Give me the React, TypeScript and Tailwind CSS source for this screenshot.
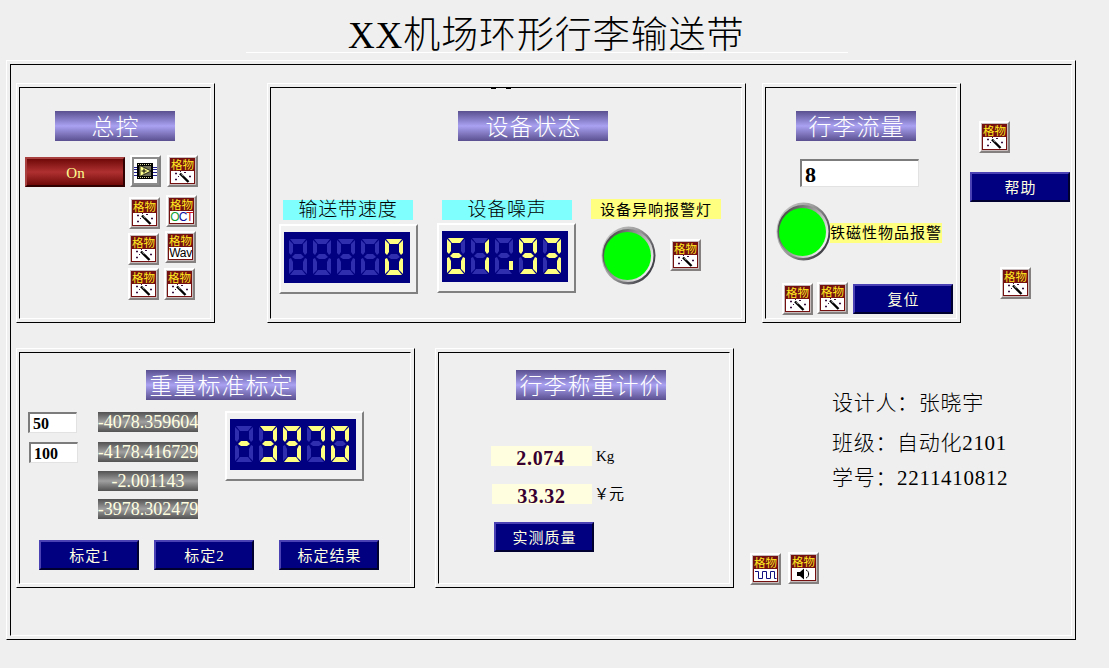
import React from 'react';

type Kids = { children?: React.ReactNode; className?: string };

function Panel({ children, className = '' }: Kids) {
  return (
    <section className={`shrink-0 border border-t-white border-l-white border-r-black border-b-black pt-[3px] pl-[2px] pr-[3px] pb-[3px] ${className}`}>
      <div className="h-full w-full border border-t-black border-l-black border-r-white border-b-white">{children}</div>
    </section>
  );
}

function Heading({ children, className = '' }: Kids) {
  return (
    <h2 className={`flex h-[30px] shrink-0 items-center justify-center whitespace-nowrap bg-linear-to-b from-[#5a5090] via-[#aaa2f2] to-[#5a5090] pt-[3px] pl-px text-[23px] leading-[27px] font-light tracking-[1px] text-white ${className}`}>
      {children}
    </h2>
  );
}

function Button({ children, className = '' }: Kids) {
  return (
    <button className={`flex h-[30px] w-[100px] shrink-0 items-center justify-center border-2 border-t-[#4a42b4] border-l-[#4a42b4] border-r-[#000030] border-b-[#000030] bg-[#000080] pt-[2px] pl-px text-[15px] leading-[24px] tracking-[1px] text-[#ffffe0] ${className}`}>
      {children}
    </button>
  );
}

function Wand() {
  return (
    <svg width="23" height="12" viewBox="0 0 23 12">
      <path d="M9 2.5l8.5 8.5" stroke="#000" strokeWidth="2.4" fill="none" />
      <path d="M10.5 3.2l2 2" stroke="#e8e8e8" strokeWidth="0.8" />
      <path d="M4 2h2v1h-2zM4.500 1.500h1v2h-1zM13 1h2v1h-2zM4 8h2v1h-2zM4.500 7.500h1v2h-1zM18 5h2v1h-2zM18.500 4.500h1v2h-1zM7 5h1v1h-1zM9 0h1v1h-1z" fill="#3a1040" />
    </svg>
  );
}

function Tile({ kind = 'wand', className = '' }: { kind?: 'wand' | 'oct' | 'wav' | 'wave' | 'sound'; className?: string }) {
  return (
    <div className={`h-[32px] w-[31px] shrink-0 border-2 border-t-white border-l-white border-r-[#858080] border-b-[#858080] bg-[#c8bcbc] pt-px pl-px ${className}`}>
      <div className="flex h-[26px] w-[25px] flex-col overflow-hidden border border-[#741010] bg-white">
        <div className="flex h-[12px] shrink-0 items-center justify-center whitespace-nowrap bg-[#741010] text-[11.5px] leading-[12px] text-[#ffe820]">格物</div>
        {kind === 'wand' && <Wand />}
        {kind === 'oct' && (
          <div className="flex h-[12px] justify-center font-['Liberation_Sans'] text-[12px] leading-[13px] tracking-[-1px]">
            <span className="text-[#10a030]">O</span><span className="text-[#1010a0]">C</span><span className="text-[#d01010]">T</span>
          </div>
        )}
        {kind === 'wav' && (
          <div className="flex h-[12px] justify-center font-['Liberation_Sans'] text-[12px] leading-[12px] tracking-[-0.3px] text-black">Wav</div>
        )}
        {kind === 'wave' && (
          <svg width="23" height="12" viewBox="0 0 23 12"><path d="M1 2.500h3.500v7h4v-7h4v7h4v-7h4v7h2" fill="none" stroke="#101080" strokeWidth="1" /></svg>
        )}
        {kind === 'sound' && (
          <svg width="23" height="12" viewBox="0 0 23 12">
            <path d="M5 4h3l4-3.500v11L8 8H5z" fill="#000" />
            <path d="M14 2c3.500 1 3.500 7 0 8" fill="none" stroke="#000" strokeWidth="1" />
          </svg>
        )}
      </div>
    </div>
  );
}

function Chip({ className = '' }: { className?: string }) {
  return (
    <div className={`h-[32px] w-[31px] shrink-0 border-2 border-t-white border-l-white border-r-[#808080] border-b-[#808080] bg-[#8c8c8c] pt-[2px] pl-[2px] ${className}`}>
      <svg width="23" height="24" viewBox="0 0 23 24">
        <rect width="23" height="24" fill="#fff" />
        <path d="M0 8.500h23M0 10.500h23M0 13.500h23M0 16.500h23" stroke="#202090" />
        <rect x="3" y="4" width="16" height="16" fill="#000" />
        <path d="M4 5.500h14M4 18.500h14" stroke="#d8d8a0" strokeDasharray="1 1" />
        <rect x="5" y="7" width="12" height="10" fill="#707058" />
        <path d="M6 6.500v11l11-5.500z" fill="#ffff90" stroke="#000" strokeWidth="0.8" />
        <path d="M7.500 12h5M10 9.500v5" stroke="#000" />
      </svg>
    </div>
  );
}

const SEGMENTS: Record<string, string> = {
  a: '1,0 17,0 13,5 5,5',
  b: '18,1 18,14 16,16 14,13 14,5',
  c: '18,20 18,35 14,31 14,23 16,19',
  d: '1,36 17,36 13,31 5,31',
  e: '0,20 0,35 4,31 4,23 2,19',
  f: '0,1 0,14 2,16 4,13 4,5',
  g: '3,18 6,15 12,15 15,18 12,20 6,20',
};

const LIT: Record<string, string> = {
  ' ': '', '-': 'g', '.': '', '0': 'abcdef', '1': 'bc', '3': 'abcdg', '6': 'acdefg', '7': 'abc', '9': 'abcdfg',
};

function Lcd({ value, className = '' }: { value: string; className?: string }) {
  return (
    <div className={`h-[70px] w-[139px] shrink-0 border-2 border-t-white border-l-white border-r-[#808080] border-b-[#808080] bg-[#f1f1f1] pt-[6px] pl-[3px] ${className}`}>
      <svg width="126" height="51" viewBox="0 0 126 51" className="block bg-[#000080]">
        {value.split('').map((ch, i) => (
          <g key={i} transform={`translate(${5 + i * 24} 7)`}>
            {Object.keys(SEGMENTS).map((s) =>
              ch === '.' && s === 'c' ? null : (
                <polygon key={s} points={SEGMENTS[s]} fill={LIT[ch].includes(s) ? '#ffff80' : '#2e2eae'} />
              ),
            )}
            {ch === '.' && <rect x="14" y="23" width="4" height="9" fill="#ffff80" />}
          </g>
        ))}
      </svg>
    </div>
  );
}

function Lamp({ id, className = '' }: { id: string; className?: string }) {
  return (
    <svg width="55" height="59" viewBox="0 0 55 59" className={`shrink-0 ${className}`}>
      <defs>
        <linearGradient id={`${id}o`} x1="0" y1="0" x2="1" y2="0.6">
          <stop offset="0" stopColor="#d0d0d0" /><stop offset="0.5" stopColor="#a0a0a0" /><stop offset="1" stopColor="#404048" />
        </linearGradient>
        <linearGradient id={`${id}i`} x1="0" y1="0.2" x2="1" y2="0.8">
          <stop offset="0" stopColor="#404040" /><stop offset="0.5" stopColor="#a0a0a0" /><stop offset="1" stopColor="#fff" />
        </linearGradient>
      </defs>
      <ellipse cx="27.5" cy="29.5" rx="27" ry="29" fill={`url(#${id}o)`} />
      <ellipse cx="27" cy="29.5" rx="25.5" ry="26.5" fill={`url(#${id}i)`} />
      <ellipse cx="26.5" cy="30" rx="23.5" ry="24" fill="#00ff00" />
    </svg>
  );
}

function Label({ children, className = '' }: Kids) {
  return <div className={`flex h-[20px] shrink-0 items-center justify-center whitespace-nowrap text-black ${className}`}>{children}</div>;
}

function Field({ value, className = '' }: { value: string; className?: string }) {
  return (
    <input readOnly value={value} className={`block shrink-0 border-t-2 border-l-2 border-r border-b border-t-[#7c7c7c] border-l-[#7c7c7c] border-r-[#e2e2e2] border-b-[#e2e2e2] bg-white pt-px pl-[3px] font-bold text-black outline-none ${className}`} />
  );
}

function Reading({ children, className = '' }: Kids) {
  return (
    <div className={`flex h-[20px] w-[100px] items-center justify-center whitespace-nowrap bg-linear-to-b from-[#525252] via-[#a0a0a0] to-[#525252] text-[18px] leading-[20px] text-[#ffffe0] ${className}`}>
      {children}
    </div>
  );
}

export default function App() {
  return (
    <main className="h-[668px] w-[1109px] overflow-hidden bg-[#efefef] font-['Liberation_Serif','Noto_Sans_CJK_SC',serif] text-black">
      <header className="flex h-[60px] flex-col">
        <h1 className="mt-[12px] ml-[348px] h-[40px] text-[37px] leading-[47px] font-light tracking-[0.9px] whitespace-nowrap">XX机场环形行李输送带</h1>
        <div className="ml-[246px] h-px w-[602px] bg-white" />
      </header>

      <Panel className="ml-[6px] h-[580px] w-[1070px] pl-[3px]!">
        <div className="flex pt-[18px] pl-[5px]">
          <Panel className="h-[240px] w-[199px]">
            <Heading className="mt-[23px] ml-[35px] w-[120px]">总控</Heading>
            <div className="mt-[14px] ml-[5px] flex">
              <Button className="mt-[2px] border-t-[#a84040]! border-l-[#a84040]! border-r-[#300000]! border-b-[#300000]! bg-linear-to-b from-[#700808] via-[#b03030] to-[#700808] tracking-normal! text-[#ffff90]!">On</Button>
              <div className="ml-[3px] w-[33px]">
                <Chip className="ml-[2px]" />
                <Tile className="mt-[10px] ml-px" />
                <Tile className="mt-[4px]" />
                <Tile className="mt-[3px]" />
              </div>
              <div className="ml-[3px] w-[34px]">
                <Tile className="ml-[3px]" />
                <Tile kind="oct" className="mt-[8px] ml-[2px]" />
                <Tile kind="wav" className="mt-[4px] ml-px" />
                <Tile className="mt-[5px]" />
              </div>
            </div>
          </Panel>

          <Panel className="ml-[52px] h-[240px] w-[479px]">
            <div className="flex h-px gap-[10px] pl-[220px]">
              <div className="w-[5px] bg-black" />
              <div className="w-[5px] bg-black" />
            </div>
            <Heading className="mt-[22px] ml-[187px] w-[150px]">设备状态</Heading>
            <div className="mt-[58px] flex">
              <div className="ml-[8px] w-[139px]">
                <Label className="mt-px ml-[4px] w-[130px] bg-[#80ffff] text-[19px] font-light tracking-[0.8px]">输送带速度</Label>
                <Lcd value="    0" className="mt-[4px]" />
              </div>
              <div className="ml-[19px] w-[139px]">
                <Label className="mt-px ml-[5px] w-[130px] bg-[#80ffff] text-[19px] font-light tracking-[0.8px]">设备噪声</Label>
                <Lcd value="61.93" className="mt-[3px]" />
              </div>
              <div className="ml-[15px] w-[130px]">
                <Label className="w-[130px] bg-[#ffff80] pt-[2px] text-[15px] tracking-[1px]">设备异响报警灯</Label>
                <div className="mt-[7px] flex">
                  <Lamp id="noise" className="ml-[10px]" />
                  <Tile className="mt-[13px] ml-[14px]" />
                </div>
              </div>
            </div>
          </Panel>

          <Panel className="ml-[16px] h-[240px] w-[199px]">
            <Heading className="mt-[23px] ml-[30px] w-[120px]">行李流量</Heading>
            <Field value="8" className="mt-[18px] ml-[34px] h-[28px] w-[119px] text-[22px]" />
            <div className="mt-[15px] ml-[10px] flex">
              <Lamp id="metal" className="-mr-px" />
              <Label className="mt-[21px] w-[112px] bg-[#ffff80] pt-px text-[15px] tracking-[1px]">铁磁性物品报警</Label>
            </div>
            <div className="mt-[21px] ml-[16px] flex">
              <Tile className="mt-px" />
              <Tile className="ml-[4px]" />
              <Button className="mt-[2px] ml-[5px]">复位</Button>
            </div>
          </Panel>

          <div className="ml-[9px] w-[100px] pt-[38px]">
            <Tile className="ml-[9px]" />
            <Button className="mt-[19px]">帮助</Button>
            <Tile className="mt-[65px] ml-[30px]" />
          </div>
        </div>

        <div className="flex pt-[25px] pl-[5px]">
          <Panel className="h-[240px] w-[399px]">
            <Heading className="mt-[17px] ml-[126px] w-[150px]">重量标准标定</Heading>
            <div className="flex h-[108px] pt-[11px] pl-[8px]">
              <div className="w-[70px] pt-px">
                <Field value="50" className="h-[21px] w-[49px] text-[16px]" />
                <Field value="100" className="mt-[9px] ml-px h-[21px] w-[49px] text-[16px]" />
              </div>
              <div className="pt-px">
                <Reading>-4078.359604</Reading>
                <Reading className="mt-[10px]">-4178.416729</Reading>
                <Reading className="mt-[9px]">-2.001143</Reading>
                <Reading className="mt-[8px]">-3978.302479</Reading>
              </div>
              <Lcd value="-3970" className="ml-[27px]" />
            </div>
            <div className="mt-[32px] ml-[19px] flex">
              <Button>标定1</Button>
              <Button className="ml-[15px]">标定2</Button>
              <Button className="ml-[25px]">标定结果</Button>
            </div>
          </Panel>

          <Panel className="ml-[20px] h-[240px] w-[299px]">
            <Heading className="mt-[17px] ml-[77px] w-[150px]">行李称重计价</Heading>
            <div className="mt-[46px] ml-[52px] flex">
              <Label className="w-[101px] bg-[#ffffe0] pt-[3px] pr-[2px] text-[20px] font-bold tracking-[0.7px] text-[#380030]!">2.074</Label>
              <Label className="ml-[4px] pt-px text-[15px]">Kg</Label>
            </div>
            <div className="mt-[18px] ml-[53px] flex">
              <Label className="w-[100px] bg-[#ffffe0] pt-[3px] pr-px text-[20px] font-bold tracking-[0.7px] text-[#380030]!">33.32</Label>
              <Label className="ml-[2px] text-[15px]">￥元</Label>
            </div>
            <Button className="mt-[18px] ml-[55px]">实测质量</Button>
          </Panel>

          <div className="ml-[16px] w-[300px]">
            <div className="mt-[43px] ml-[82px] text-[21px] leading-[24px] font-light tracking-[0.7px] whitespace-pre">
              <p>设计人：张晓宇</p>
              <p className="mt-[16px]">班级：自动化2101</p>
              <p className="mt-[11px]">学号：2211410812</p>
            </div>
            <div className="mt-[62px] flex">
              <Tile kind="wave" className="mt-px" />
              <Tile kind="sound" className="ml-[7px]" />
            </div>
          </div>
        </div>
      </Panel>
    </main>
  );
}
